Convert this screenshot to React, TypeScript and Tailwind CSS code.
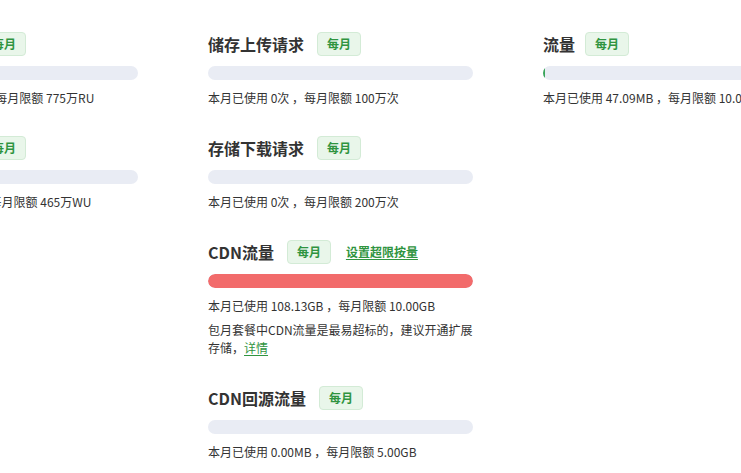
import React from 'react'

type Quota = {
    title: string
    used: string
    limit: string
    percent: number
    badgeGap?: string
    link?: string
    note?: boolean
}

const columns: Quota[][] = [
    [
        { title: '数据库读操作', used: '8.6万RU', limit: '775万RU', percent: 0 },
        { title: '数据库写操作', used: '536WU', limit: '465万WU', percent: 0 },
    ],
    [
        { title: '储存上传请求', used: '0次', limit: '100万次', percent: 0 },
        { title: '存储下载请求', used: '0次', limit: '200万次', percent: 0 },
        { title: 'CDN流量', used: '108.13GB', limit: '10.00GB', percent: 100, link: '设置超限按量', note: true },
        { title: 'CDN回源流量', used: '0.00MB', limit: '5.00GB', percent: 0 },
    ],
    [
        { title: '流量', used: '47.09MB', limit: '10.00GB', percent: 0.46, badgeGap: 'ml-[10px]' },
    ],
]

function QuotaItem({ item }: { item: Quota }) {
    const over = item.percent >= 100
    return (
        <div className="mb-[29px]">
            <div className="flex flex-row items-center h-6">
                <h3 className="text-base font-bold text-[#333] whitespace-nowrap leading-6">{item.title}</h3>
                <span className={(item.badgeGap ?? 'ml-[13px]') + ' flex items-center justify-center w-[44px] h-6 rounded border border-[#d3ebd6] bg-[#e9f6ea] text-xs font-bold text-[#2f9440]'}>
                    每月
                </span>
                {item.link ? (
                    <a className="ml-[15px] text-xs font-bold text-[#2f9440] underline underline-offset-2 whitespace-nowrap cursor-pointer">
                        {item.link}
                    </a>
                ) : null}
            </div>
            <div className="mt-[10px] h-[14px] w-full rounded-full bg-[#e9ecf4] overflow-hidden">
                {item.percent > 0 ? (
                    <div
                        className={over ? 'h-full rounded-full bg-[#f26b6b]' : 'h-full bg-[#3aa55a] min-w-[2px]'}
                        style={{ width: `${Math.min(item.percent, 100)}%` }}
                    />
                ) : null}
            </div>
            <p className="mt-[9px] text-xs leading-[18px] text-[#333] whitespace-nowrap">
                本月已使用 {item.used} ，每月限额 {item.limit}
            </p>
            {item.note ? (
                <p className="mt-[6px] text-xs leading-[18px] text-[#333]">
                    包月套餐中CDN流量是最易超标的，建议开通扩展存储，
                    <a className="text-[#2f9440] underline underline-offset-2 cursor-pointer">详情</a>
                </p>
            ) : null}
        </div>
    )
}

export default function App() {
    return (
        <div
            className="w-[741px] h-[473px] overflow-hidden bg-white"
            style={{ fontFamily: '"Noto Sans CJK SC", "Noto Sans", sans-serif' }}
        >
            <div className="flex flex-row gap-[70px] ml-[-127px] pt-[32px]">
                {columns.map((col, i) => (
                    <div key={i} className="w-[265px] shrink-0 flex flex-col">
                        {col.map((item) => (
                            <QuotaItem key={item.title} item={item} />
                        ))}
                    </div>
                ))}
            </div>
        </div>
    )
}
